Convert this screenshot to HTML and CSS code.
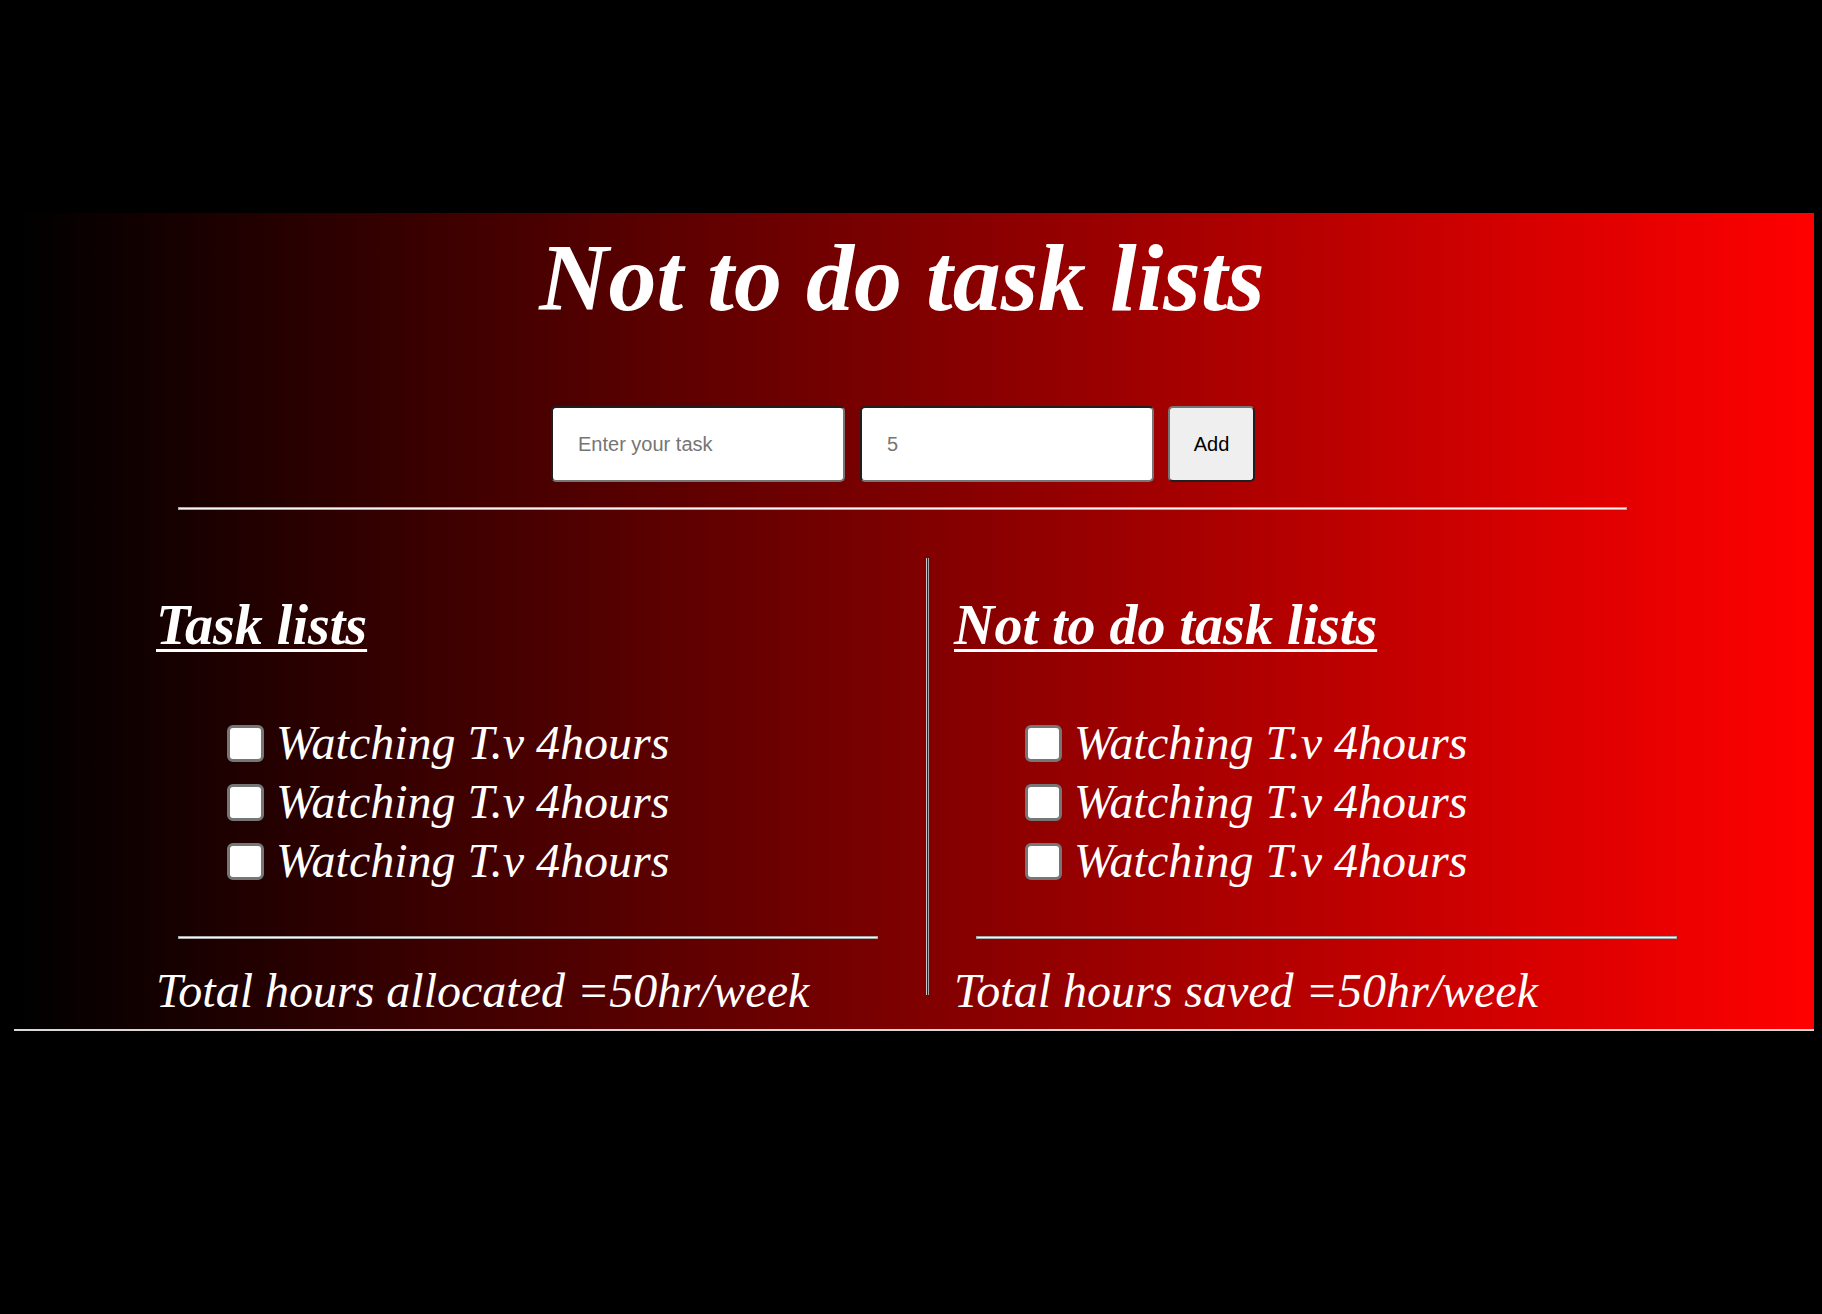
FILE: index.html
```html
<!DOCTYPE html>
<html lang="en">
<head>
<meta charset="utf-8">
<title>Not to do task lists</title>
<link rel="stylesheet" href="styles.css">
</head>
<body>
<div class="panel">
  <h1 class="title">Not to do task lists</h1>
  <form class="entry" onsubmit="return false">
    <input class="field" type="text" placeholder="Enter your task">
    <input class="field" type="number" placeholder="5">
    <button class="add" type="button">Add</button>
  </form>
  <hr class="rule rule-top">
  <div class="columns">
    <section class="col col-left">
      <h2 class="heading">Task lists</h2>
      <ul class="items">
        <li class="item"><input class="check" type="checkbox"> Watching T.v 4hours</li>
        <li class="item"><input class="check" type="checkbox"> Watching T.v 4hours</li>
        <li class="item"><input class="check" type="checkbox"> Watching T.v 4hours</li>
      </ul>
      <hr class="rule rule-col">
      <p class="total">Total hours allocated =50hr/week</p>
    </section>
    <div class="divider"></div>
    <section class="col col-right">
      <h2 class="heading">Not to do task lists</h2>
      <ul class="items">
        <li class="item"><input class="check" type="checkbox"> Watching T.v 4hours</li>
        <li class="item"><input class="check" type="checkbox"> Watching T.v 4hours</li>
        <li class="item"><input class="check" type="checkbox"> Watching T.v 4hours</li>
      </ul>
      <hr class="rule rule-col rule-col-right">
      <p class="total">Total hours saved =50hr/week</p>
    </section>
  </div>
</div>
</body>
</html>
```

FILE: styles.css
```css
html, body {
  margin: 0;
  padding: 0;
  background: #000;
}

body {
  height: 1314px;
  overflow: hidden;
  font-family: "Liberation Serif", "Times New Roman", serif;
  color: #fff;
}

.panel {
  box-sizing: border-box;
  width: 1800px;
  margin: 213px 0 0 14px;
  padding: 12px 24px 10px 0;
  background: linear-gradient(to right, #000 0%, #ff0000 100%);
  border-bottom: 2px solid #d8d8d8;
}

.title {
  margin: 0;
  font-size: 96px;
  font-weight: bold;
  font-style: italic;
  line-height: 106px;
  text-align: center;
}

.entry {
  display: flex;
  justify-content: center;
  align-items: stretch;
  margin: 75px 0 0 0;
  padding-left: 2px;
}

.field {
  box-sizing: border-box;
  width: 294px;
  height: 76px;
  margin-right: 15px;
  padding: 0 25px;
  border-width: 2px;
  border-style: solid;
  border-color: #1f1f1f #767676 #767676 #1f1f1f;
  border-radius: 5px;
  background: #fff;
  font-family: "Liberation Sans", Arial, sans-serif;
  font-size: 20px;
  color: #000;
  outline: none;
  -moz-appearance: textfield;
}

.field::-webkit-outer-spin-button,
.field::-webkit-inner-spin-button {
  -webkit-appearance: none;
  margin: 0;
}

.field::placeholder {
  color: #757575;
}

.add {
  box-sizing: border-box;
  width: 87px;
  height: 76px;
  margin-left: -1px;
  padding: 0;
  border-width: 2px;
  border-style: solid;
  border-color: #767676 #1f1f1f #1f1f1f #767676;
  border-radius: 5px;
  background: #efefef;
  font-family: "Liberation Sans", Arial, sans-serif;
  font-size: 20px;
  color: #000;
}

.rule {
  box-sizing: content-box;
  height: 1px;
  margin: 0;
  border: 1px solid #a8a8a8;
  background: #f4f4f4;
}

.rule-top {
  width: 1447px;
  margin: 25px 0 0 164px;
}

.columns {
  display: flex;
  align-items: flex-start;
  margin: 48px 0 0 114px;
}

.col {
  box-sizing: border-box;
  padding-top: 36px;
}

.col-left {
  width: 798px;
  padding-left: 28px;
}

.col-right {
  width: 820px;
  padding-left: 26px;
}

.divider {
  flex: none;
  width: 1px;
  height: 437px;
  border-left: 1px solid #c9c9c9;
  border-right: 1px solid #a9a9a9;
  margin-right: -1px;
}

.heading {
  margin: 0;
  font-size: 56px;
  font-weight: bold;
  font-style: italic;
  line-height: 62px;
  text-decoration: underline;
  text-decoration-thickness: 3px;
  text-underline-offset: 5px;
  white-space: nowrap;
}

.items {
  list-style: none;
  margin: 57px 0 0 0;
  padding: 0 0 0 71px;
}

.item {
  font-size: 48px;
  font-style: italic;
  line-height: 59px;
  white-space: nowrap;
}

.check {
  -webkit-appearance: none;
  appearance: none;
  box-sizing: border-box;
  width: 37px;
  height: 37px;
  margin: 0 0 -3px 0;
  border: 3px solid #767676;
  border-radius: 6px;
  background: #fff;
  vertical-align: baseline;
}

.rule-col {
  width: 698px;
  margin: 46px 0 0 22px;
}

.rule-col-right {
  width: 699px;
}

.total {
  margin: 24px 0 0 0;
  font-size: 48px;
  font-style: italic;
  line-height: 56px;
  white-space: nowrap;
}
```
